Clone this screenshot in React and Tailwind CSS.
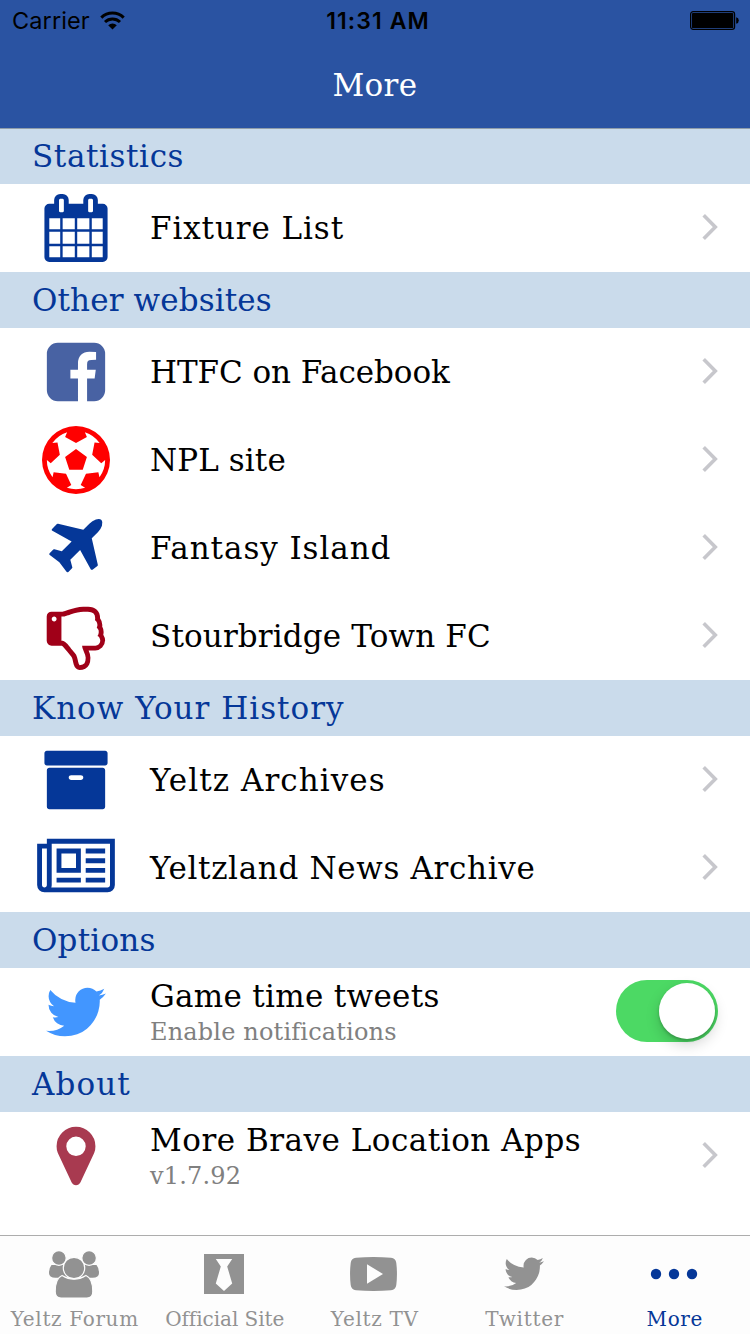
const SLAB = "font-['DejaVu_Serif',serif]";

const ICONS = {
  calendar:
    'M192 1664h288v-288h-288v288zm352 0h320v-288h-320v288zm-352-352h288v-320h-288v320zm352 0h320v-320h-320v320zm-352-384h288v-288h-288v288zm736 736h320v-288h-320v288zm-384-736h320v-288h-320v288zm768 736h288v-288h-288v288zm-384-352h320v-320h-320v320zm-352-864v-288q0-13-9.5-22.5t-22.5-9.5h-64q-13 0-22.5 9.5t-9.5 22.5v288q0 13 9.5 22.5t22.5 9.5h64q13 0 22.5-9.5t9.5-22.5zm736 864h288v-320h-288v320zm-384-384h320v-288h-320v288zm384 0h288v-288h-288v288zm32-480v-288q0-13-9.5-22.5t-22.5-9.5h-64q-13 0-22.5 9.5t-9.5 22.5v288q0 13 9.5 22.5t22.5 9.5h64q13 0 22.5-9.5t9.5-22.5zm384-64v1280q0 52-38 90t-90 38h-1408q-52 0-90-38t-38-90v-1280q0-52 38-90t90-38h128v-96q0-66 47-113t113-47h64q66 0 113 47t47 113v96h384v-96q0-66 47-113t113-47h64q66 0 113 47t47 113v96h128q52 0 90 38t38 90z',
  facebook:
    'M1376 128q119 0 203.5 84.5t84.5 203.5v960q0 119-84.5 203.5t-203.5 84.5h-188v-595h199l30-232h-229v-148q0-56 23.5-84t91.5-28l122-1v-207q-63-9-178-9-136 0-217.5 80t-81.5 226v171h-200v232h200v595h-532q-119 0-203.5-84.5t-84.5-203.5v-960q0-119 84.5-203.5t203.5-84.5h960z',
  football:
    'M609 816l287-208 287 208-109 336h-355zm287-816q182 0 348 71t286 191 191 286 71 348-71 348-191 286-286 191-348 71-348-71-286-191-191-286-71-348 71-348 191-286 286-191 348-71zm619 1350q149-203 149-454v-3l-102 89-240-224 63-323 134 12q-150-206-389-282l53 124-287 159-287-159 53-124q-239 76-389 282l135-12 62 323-240 224-102-89v3q0 251 149 454l30-132 326 40 139 298-116 69q117 39 240 39t240-39l-116-69 139-298 326-40z',
  plane:
    'M1568 160q44 52 12 148t-108 172l-161 161 160 696q5 19-12 33l-128 96q-7 6-19 6-4 0-7-1-15-3-21-16l-279-508-259 259 53 194q5 17-8 31l-96 96q-9 9-23 9h-2q-15-2-24-13l-189-252-252-189q-11-7-13-23-1-13 9-25l96-97q9-9 23-9 6 0 8 1l194 53 259-259-508-279q-14-8-17-24-2-16 9-27l128-128q14-13 30-8l665 159 160-160q76-76 172-108t148 12z',
  thumbsDown:
    'M384 448q0-26-19-45t-45-19-45 19-19 45 19 45 45 19 45-19 19-45zm1152 576q0 51-39 89.5t-89 38.5h-352q0 58 48 159.5t48 160.5q0 98-32 145t-128 47q-26-26-38-85t-30.5-125.5-59.5-109.5q-22-23-77-91-4-5-23-30t-31.5-41-34.5-42.5-40-44-38.5-35.5-40-27-35.5-9h-32v-640h32q13 0 31.5-3t33-6.5 38-11 35-11.5 35.5-12.5 29-10.5q211-73 342-73h121q192 0 192 167 0 26-5 56 30 16 47.5 52.5t17.5 73.5-18 69q53 50 53 119 0 25-10 55.5t-25 47.5q32 1 53.5 47t21.5 81zm128-1q0-89-49-163 9-33 9-69 0-77-38-144 3-21 3-43 0-101-60-178 1-139-85-219.5t-227-80.5h-133q-96 0-189.5 22.5t-216.5 65.5q-116 40-138 40h-288q-53 0-90.5 37.5t-37.5 90.5v640q0 53 37.5 90.5t90.5 37.5h274q36 24 137 155 58 75 107 128 24 25 35.5 85.5t30.5 126.5 62 108q39 37 90 37 84 0 151-32.5t102-101.5 35-186q0-93-48-192h176q104 0 180-76t76-179z',
  archive:
    'M1088 832q0-26-19-45t-45-19h-256q-26 0-45 19t-19 45 19 45 45 19h256q26 0 45-19t19-45zm576-192v960q0 26-19 45t-45 19h-1408q-26 0-45-19t-19-45v-960q0-26 19-45t45-19h1408q26 0 45 19t19 45zm64-448v256q0 26-19 45t-45 19h-1536q-26 0-45-19t-19-45v-256q0-26 19-45t45-19h1536q26 0 45 19t19 45z',
  newspaper:
    'M1024 512h-384v384h384v-384zm128 640v128h-640v-128h640zm0-768v640h-640v-640h640zm640 768v128h-512v-128h512zm0-256v128h-512v-128h512zm0-256v128h-512v-128h512zm0-256v128h-512v-128h512zm-1536 960v-960h-128v960q0 26 19 45t45 19 45-19 19-45zm1664 0v-1088h-1536v1088q0 33-11 64h1483q26 0 45-19t19-45zm128-1216v1216q0 80-56 136t-136 56h-1664q-80 0-136-56t-56-136v-1088h256v-128h1792z',
  twitter:
    'M1684 408q-67 98-162 167 1 14 1 42 0 130-38 259.5t-115.5 248.5-184.5 210.5-258 146-323 54.5q-271 0-496-145 35 4 78 4 225 0 401-138-105-2-188-64.5t-114-159.5q33 5 61 5 43 0 85-11-112-23-185.5-111.5t-73.5-205.5v-4q68 38 146 41-66-44-105-115t-39-154q0-88 44-163 121 149 294.5 238.5t371.5 99.5q-8-38-8-74 0-134 94.5-228.5t228.5-94.5q140 0 236 102 109-21 205-78-37 115-142 178 93-10 186-50z',
  marker:
    'M1152 640q0-106-75-181t-181-75-181 75-75 181 75 181 181 75 181-75 75-181zm256 0q0 109-33 179l-364 774q-16 33-47.5 52t-67.5 19-67.5-19-46.5-52l-365-774q-33-70-33-179 0-212 150-362t362-150 362 150 150 362z',
};

const NAVY = 'text-[#053798]';

const SECTIONS = [
  {
    title: 'Statistics',
    tracking: 'tracking-[0.6px]',
    rows: [{ icon: 'calendar', color: NAVY, label: 'Fixture List', tracking: 'tracking-[0.9px]' }],
  },
  {
    title: 'Other websites',
    tracking: 'tracking-[0.12px]',
    rows: [
      { icon: 'facebook', color: 'text-[#4862a3]', label: 'HTFC on Facebook', tracking: 'tracking-[-0.07px]' },
      { icon: 'football', color: 'text-[#ff0000]', label: 'NPL site', tracking: 'tracking-[0.1px]' },
      { icon: 'plane', color: NAVY, label: 'Fantasy Island', tracking: 'tracking-[0.92px]' },
      { icon: 'thumbsDown', color: 'text-[#a00018]', label: 'Stourbridge Town FC', tracking: 'tracking-[0.14px]' },
    ],
  },
  {
    title: 'Know Your History',
    tracking: 'tracking-[1px]',
    rows: [
      { icon: 'archive', color: NAVY, label: 'Yeltz Archives', tracking: 'tracking-[1.05px]' },
      { icon: 'newspaper', color: NAVY, label: 'Yeltzland News Archive', tracking: 'tracking-[0.66px]' },
    ],
  },
  {
    title: 'Options',
    tracking: 'tracking-[0.2px]',
    rows: [
      {
        icon: 'twitter',
        color: 'text-[#4296ff]',
        label: 'Game time tweets',
        tracking: 'tracking-[0.3px]',
        detail: 'Enable notifications',
        toggle: true,
      },
    ],
  },
  {
    title: 'About',
    tracking: 'tracking-[1.1px]',
    rows: [
      {
        icon: 'marker',
        color: 'text-[#a83a50]',
        label: 'More Brave Location Apps',
        tracking: 'tracking-[0.5px]',
        detail: 'v1.7.92',
      },
    ],
  },
];

function Glyph({ name }) {
  const wide = name === 'newspaper';
  return (
    <svg
      viewBox={wide ? '0 0 2048 1792' : '0 0 1792 1792'}
      className={wide ? 'h-[68px] w-[78px]' : 'size-[68px]'}
      fill="currentColor"
      fillRule="evenodd"
    >
      <path d={ICONS[name]} />
    </svg>
  );
}

function StatusBar() {
  return (
    <div className="grid h-10 grid-cols-3 items-center pl-3 pr-2.5 pt-0.5 font-[Inter,sans-serif] text-2xl text-black">
      <div className="flex items-center gap-2.5">
        <span className="text-[23.5px] tracking-[0.1px]">Carrier</span>
        <svg viewBox="0 0 25 19" className="mb-px h-[19px] w-[25px]" fill="none" stroke="currentColor" strokeWidth="3">
          <path d="M1.3 6.6a16 16 0 0 1 22.4 0" />
          <path d="M5 11a11 11 0 0 1 15 0" />
          <path d="M12.5 18.6 8.2 14.2a6.2 6.2 0 0 1 8.6 0z" fill="currentColor" stroke="none" />
        </svg>
      </div>
      <span className="ml-1 text-center text-[23px] font-semibold tracking-[1.1px]">11:31 AM</span>
      <svg viewBox="0 0 50 19" className="mb-px h-[19px] w-[50px] justify-self-end">
        <rect x=".6" y=".6" width="44" height="17.8" rx="2.6" fill="none" stroke="#000" strokeWidth="1.2" />
        <rect x="1.9" y="1.9" width="41.4" height="15.2" rx="1.2" />
        <path d="M46.2 6.2q2.6.6 2.6 3.3t-2.6 3.3z" />
      </svg>
    </div>
  );
}

function Toggle() {
  return (
    <div className="mb-0.5 flex h-[62px] w-[102px] items-center justify-end rounded-full bg-[#4cd964] p-[3px]">
      <div className="size-14 rounded-full bg-white shadow-[0_6px_14px_rgba(0,0,0,0.17),0_2px_3px_rgba(0,0,0,0.2)]" />
    </div>
  );
}

function Chevron() {
  return (
    <svg viewBox="0 0 17 28" className="mb-0.5 h-7 w-[17px]" fill="none" stroke="#c7c7cc" strokeWidth="3.6">
      <path d="M2.7 2.2 14.3 14 2.7 25.8" />
    </svg>
  );
}

function Row({ icon, color, label, tracking, detail, toggle }) {
  return (
    <div className="flex h-[88px] items-center bg-white pr-8">
      <div className={`flex w-[150px] justify-center pl-0.5 ${color}`}>
        <Glyph name={icon} />
      </div>
      <div className={`flex flex-1 flex-col ${detail ? 'pt-1' : ''}`}>
        <span className={`text-[31px] leading-9 text-black ${tracking}`}>{label}</span>
        {detail && <span className="text-2xl leading-9 tracking-[0.17px] text-[#808080]">{detail}</span>}
      </div>
      {toggle ? <Toggle /> : <Chevron />}
    </div>
  );
}

function TabIcon({ name }) {
  if (name === 'forum')
    return (
      <svg viewBox="0 0 50 47" className="h-[47px] w-[50px]" fill="currentColor">
        <path d="M2.500 14h12l6 12-5 .8H6.500Q0 26.500 0 22q0-5 2.500-8z" />
        <path d="M47.500 14h-12l-6 12 5 .8h9Q50 26.500 50 22q0-5-2.500-8z" />
        <g stroke="#fdfdfd" strokeWidth="1.2">
          <circle cx="9.9" cy="7" r="7.3" />
          <circle cx="40.1" cy="7" r="7.3" />
          <path d="M13 24.500q12 7.500 24 0 6.800 3 6.800 16 0 6.500-5.800 6.500H12q-5.800 0-5.800-6.500 0-13 6.800-16z" />
          <circle cx="25" cy="17" r="10.7" />
        </g>
      </svg>
    );
  if (name === 'site')
    return (
      <svg viewBox="0 0 40 40" className="size-10">
        <path d="M0 0h40v40H0z" fill="currentColor" />
        <path d="M11.800 5h16.400l-5 7.500 5 17-8.200 7.500-8.200-7.500 5-17z" fill="#fdfdfd" />
      </svg>
    );
  if (name === 'tv')
    return (
      <svg viewBox="0 0 47 34" className="mr-px h-[34px] w-[47px]">
        <path
          d="M6 .8q17.5-1.4 35 0 4.6.4 5.3 5.200 1.300 11 0 22-.7 4.800-5.300 5.200-17.500 1.400-35 0-4.600-.4-5.300-5.200-1.300-11 0-22 .7-4.800 5.300-5.200z"
          fill="currentColor"
        />
        <path d="M17 7.200v19.600L33 17z" fill="#fdfdfd" />
      </svg>
    );
  if (name === 'twitter')
    return (
      <svg viewBox="108 256 1576 1280" className="h-[33.5px] w-10" fill="currentColor">
        <path d={ICONS.twitter} />
      </svg>
    );
  return (
    <svg viewBox="0 0 48 12" className="h-3 w-12" fill="currentColor">
      <circle cx="6" cy="6" r="5.2" />
      <circle cx="24" cy="6" r="5.2" />
      <circle cx="42" cy="6" r="5.2" />
    </svg>
  );
}

const TABS = [
  { icon: 'forum', label: 'Yeltz Forum', tracking: 'tracking-[0.65px]' },
  { icon: 'site', label: 'Official Site', tracking: 'tracking-[-0.05px]' },
  { icon: 'tv', label: 'Yeltz TV', tracking: 'tracking-[0.7px]' },
  { icon: 'twitter', label: 'Twitter', tracking: 'tracking-[0.75px]' },
  { icon: 'more', label: 'More', tracking: 'tracking-[0.6px]', active: true },
];

export default function App() {
  return (
    <div className={`flex h-[1334px] w-[750px] flex-col overflow-hidden bg-white ${SLAB}`}>
      <header className="relative z-10 -mb-px h-[129px] shrink-0 border-b border-[#8f9daa] bg-[#2a53a2]">
        <StatusBar />
        <h1 className="flex h-[88px] items-center justify-center pt-0.5 text-[31px] tracking-[0.4px] text-white">
          More
        </h1>
      </header>
      <main className="flex-1">
        {SECTIONS.map((s) => (
          <section key={s.title}>
            <h2 className={`flex h-14 items-center bg-[#cadbeb] pl-8 text-[31px] text-[#053798] ${s.tracking}`}>
              {s.title}
            </h2>
            {s.rows.map((r) => (
              <Row key={r.label} {...r} />
            ))}
          </section>
        ))}
      </main>
      <nav className="-ml-px flex h-[99px] w-[752px] shrink-0 border-t border-[#adadad] bg-[#fdfdfd]">
        {TABS.map((t) => (
          <div
            key={t.label}
            className={`flex w-[150px] shrink-0 flex-col items-center ${t.active ? 'text-[#053798]' : 'text-[#929292]'}`}
          >
            <div className="flex h-[76px] items-center">
              <TabIcon name={t.icon} />
            </div>
            <span className={`ml-[1.5px] whitespace-nowrap text-xl leading-[14px] ${t.tracking}`}>{t.label}</span>
          </div>
        ))}
      </nav>
    </div>
  );
}
